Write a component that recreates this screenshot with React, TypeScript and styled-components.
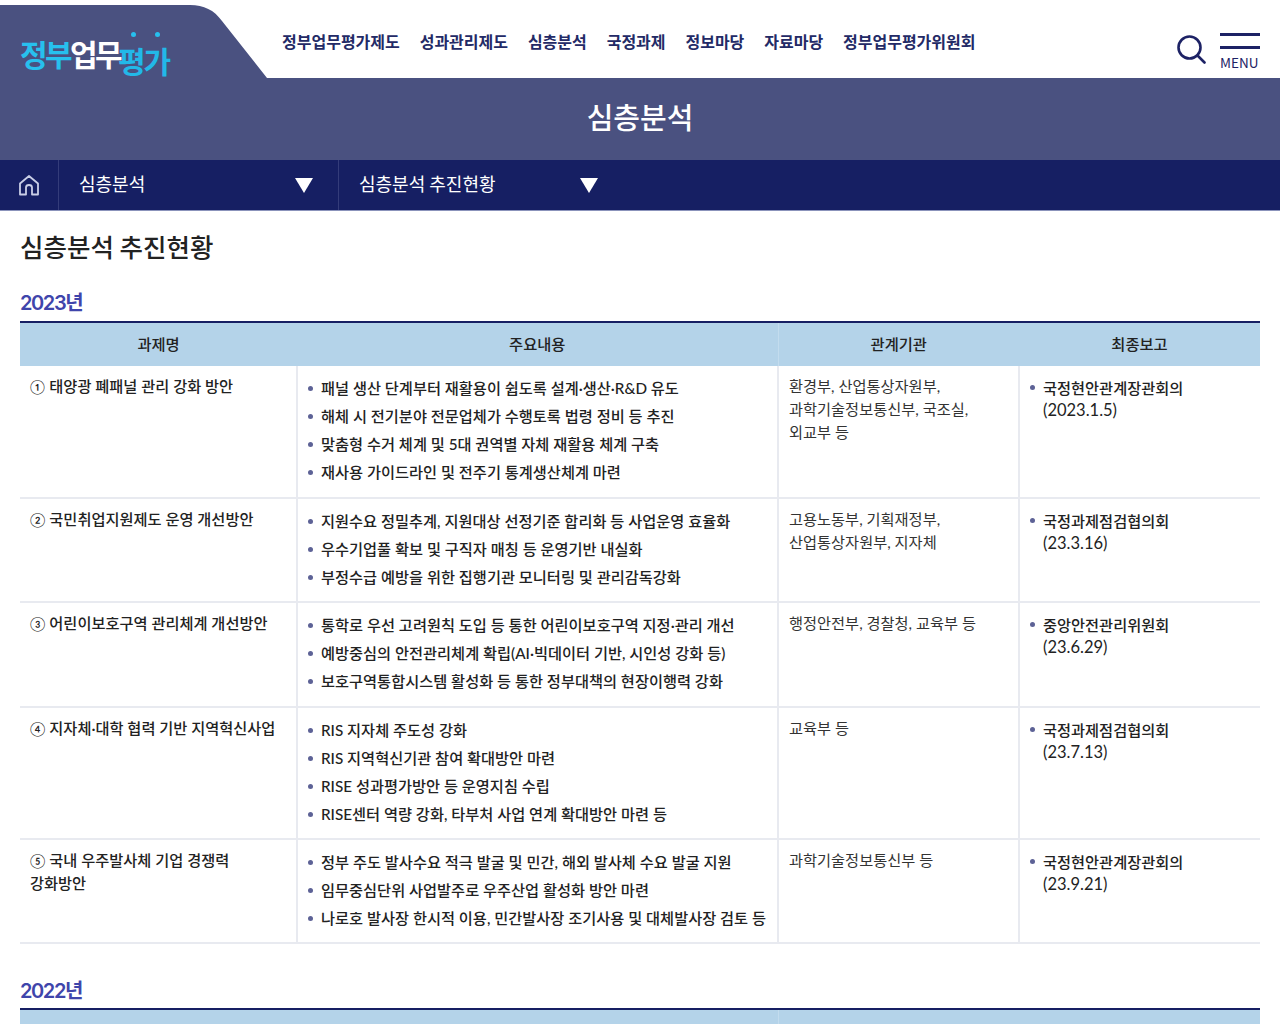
import React, { FunctionComponent } from 'react'
import styled, { createGlobalStyle } from 'styled-components'

const GlobalStyle = createGlobalStyle`
  html, body {
    margin: 0;
    padding: 0;
    background: #fff;
    color: #222;
    font-family: Lato, "Noto Sans CJK KR", sans-serif;
  }
  * { box-sizing: border-box; }
`

const Page = styled.div`
  width: 1280px;
  height: 1024px;
  overflow: hidden;
`
const Header = styled.header`
  position: relative;
  height: 78px;
  display: flex;
  padding-left: 282px;
`
const LogoShape = styled.svg`
  position: absolute;
  left: 0;
  top: 0;
`
const Logo = styled.a`
  position: absolute;
  left: 20px;
  top: 32px;
  width: 160px;
  height: 48px;
  font-family: "Noto Sans CJK KR", sans-serif;
  font-weight: 700;
  font-size: 30px;
  letter-spacing: -2.6px;
  line-height: 42px;
  white-space: nowrap;
`
const LogoBlue = styled.span`
  color: #27c0ee;
`
const LogoWhite = styled.span`
  color: #fff;
`
const LogoLast = styled.span`
  position: relative;
  top: 7px;
  margin-left: -2px;
  letter-spacing: -2.2px;
  color: #22b8e8;
`
const Dot = styled.i<{ $left: number }>`
  position: absolute;
  top: 0;
  left: ${(p) => p.$left}px;
  width: 5px;
  height: 5px;
  border-radius: 50%;
  background: #27c0ee;
`
const Nav = styled.nav`
  display: flex;
  gap: 19.9px;
  padding-top: 29px;
`
const NavItem = styled.a`
  font-family: "Noto Sans CJK KR", sans-serif;
  font-size: 16px;
  font-weight: 700;
  line-height: 24px;
  color: #232a66;
  white-space: nowrap;
`
const Tools = styled.div`
  position: absolute;
  right: 20px;
  top: 33px;
  display: flex;
  gap: 14px;
`
const SearchIcon = styled.svg`
  margin-top: 2px;
`
const MenuButton = styled.div`
  width: 40px;
`
const MenuBar = styled.div`
  height: 3px;
  background: #1d2265;
  margin-bottom: 10px;
`
const MenuLabel = styled.div`
  margin-top: -6px;
  font-family: "Noto Sans CJK KR", sans-serif;
  font-size: 13.5px;
  font-weight: 400;
  line-height: 18px;
  color: #1d2265;
`
const TitleBand = styled.div`
  height: 82px;
  padding-bottom: 6px;
  background: #4a5180;
  display: flex;
  align-items: center;
  justify-content: center;
`
const PageTitle = styled.h1`
  margin: 0;
  font-family: "Noto Sans CJK KR", sans-serif;
  font-size: 29px;
  font-weight: 500;
  color: #fff;
`
const SubNav = styled.div`
  height: 51px;
  background: #161f63;
  border-bottom: 1px solid #8b93bb;
  display: flex;
`
const HomeCell = styled.div`
  width: 59px;
  display: flex;
  align-items: center;
  justify-content: center;
  border-right: 1px solid #343c7a;
`
const SubCell = styled.div`
  width: 280px;
  padding: 0 25px 0 20px;
  display: flex;
  align-items: center;
  justify-content: space-between;
  border-right: 1px solid #343c7a;
  color: #fff;
  font-family: "Noto Sans CJK KR", sans-serif;
  font-size: 18px;
  line-height: 24px;
`
const SubCellLast = styled(SubCell)`
  padding-right: 21px;
  border-right: 0;
`
const SubLabel = styled.span`
  padding-bottom: 4px;
`
const Arrow = styled.i`
  width: 0;
  height: 0;
  border-left: 9px solid transparent;
  border-right: 9px solid transparent;
  border-top: 15px solid #fff;
`
const Content = styled.main`
  padding: 0 20px;
`
const Heading = styled.h2`
  margin: 0;
  padding-top: 17px;
  font-family: "Noto Sans CJK KR", sans-serif;
  font-size: 25.5px;
  font-weight: 500;
  line-height: 36px;
  color: #222;
`
const Year = styled.h3`
  margin: 0;
  padding-top: 25px;
  height: 57px;
  font-family: Inter, "Noto Sans CJK KR", sans-serif;
  font-size: 20px;
  font-weight: 600;
  line-height: 28px;
  letter-spacing: -1.4px;
  color: #3f45ab;
`
const YearNext = styled(Year)`
  padding-top: 33px;
  height: 64px;
`
const Table = styled.table`
  width: 1240px;
  table-layout: fixed;
  border-collapse: collapse;
  border-top: 2px solid #161f63;
`
const Th = styled.th`
  height: 44px;
  padding: 0 0 4px;
  background: #b4d3e9;
  font-family: "Noto Sans CJK KR", sans-serif;
  font-size: 15.3px;
  font-weight: 500;
  color: #222;
  &:nth-child(3) { border-left: 1px solid #c3dcee; }
`
const Td = styled.td<{ $h: number }>`
  height: ${(p) => p.$h}px;
  padding: 9px 10px 0;
  vertical-align: top;
  border-left: 2px solid #e8eaf0;
  border-bottom: 2px solid #e8eaf0;
  font-family: Lato, "Noto Sans CJK KR", sans-serif;
  font-size: 15.25px;
  line-height: 23px;
  color: #333;
  &:first-child {
    border-left: 0;
    color: #222;
    font-weight: 500;
  }
`
const Num = styled.span`
  font-size: 14px;
  font-weight: 400;
  letter-spacing: -2px;
  margin-right: 2px;
`
const ListTd = styled(Td)`
  padding-top: 8px;
`
const BulletList = styled.ul`
  margin: 0;
  padding: 0;
  list-style: none;
`
const Bullet = styled.li`
  position: relative;
  padding-left: 13px;
  line-height: 28px;
  font-weight: 500;
  color: #222;
  white-space: nowrap;
  &::before {
    content: '';
    position: absolute;
    left: 0;
    top: 12px;
    width: 5px;
    height: 5px;
    border-radius: 50%;
    background: #5d6296;
  }
`
const ReportItem = styled(Bullet)`
  line-height: 22px;
  padding-top: 3px;
  &::before { top: 11px; }
`
const ReportDate = styled.span`
  display: inline-block;
  font-size: 16.5px;
  font-weight: 400;
`

interface Row {
  num: string
  title: React.ReactNode
  height: number
  items: string[]
  orgs: React.ReactNode
  report: string
  date: string
}

const rows: Row[] = [
  {
    num: '①',
    title: '태양광 폐패널 관리 강화 방안',
    height: 132,
    items: [
      '패널 생산 단계부터 재활용이 쉽도록 설계·생산·R&D 유도',
      '해체 시 전기분야 전문업체가 수행토록 법령 정비 등 추진',
      '맞춤형 수거 체계 및 5대 권역별 자체 재활용 체계 구축',
      '재사용 가이드라인 및 전주기 통계생산체계 마련',
    ],
    orgs: (
      <>
        환경부, 산업통상자원부,
        <br />
        과학기술정보통신부, 국조실,
        <br />
        외교부 등
      </>
    ),
    report: '국정현안관계장관회의',
    date: '(2023.1.5)',
  },
  {
    num: '②',
    title: '국민취업지원제도 운영 개선방안',
    height: 104,
    items: [
      '지원수요 정밀추계, 지원대상 선정기준 합리화 등 사업운영 효율화',
      '우수기업풀 확보 및 구직자 매칭 등 운영기반 내실화',
      '부정수급 예방을 위한 집행기관 모니터링 및 관리감독강화',
    ],
    orgs: (
      <>
        고용노동부, 기획재정부,
        <br />
        산업통상자원부, 지자체
      </>
    ),
    report: '국정과제점검협의회',
    date: '(23.3.16)',
  },
  {
    num: '③',
    title: '어린이보호구역 관리체계 개선방안',
    height: 105,
    items: [
      '통학로 우선 고려원칙 도입 등 통한 어린이보호구역 지정·관리 개선',
      '예방중심의 안전관리체계 확립(AI·빅데이터 기반, 시인성 강화 등)',
      '보호구역통합시스템 활성화 등 통한 정부대책의 현장이행력 강화',
    ],
    orgs: '행정안전부, 경찰청, 교육부 등',
    report: '중앙안전관리위원회',
    date: '(23.6.29)',
  },
  {
    num: '④',
    title: '지자체·대학 협력 기반 지역혁신사업',
    height: 132,
    items: [
      'RIS 지자체 주도성 강화',
      'RIS 지역혁신기관 참여 확대방안 마련',
      'RISE 성과평가방안 등 운영지침 수립',
      'RISE센터 역량 강화, 타부처 사업 연계 확대방안 마련 등',
    ],
    orgs: '교육부 등',
    report: '국정과제점검협의회',
    date: '(23.7.13)',
  },
  {
    num: '⑤',
    title: (
      <>
        국내 우주발사체 기업 경쟁력
        <br />
        강화방안
      </>
    ),
    height: 104,
    items: [
      '정부 주도 발사수요 적극 발굴 및 민간, 해외 발사체 수요 발굴 지원',
      '임무중심단위 사업발주로 우주산업 활성화 방안 마련',
      '나로호 발사장 한시적 이용, 민간발사장 조기사용 및 대체발사장 검토 등',
    ],
    orgs: '과학기술정보통신부 등',
    report: '국정현안관계장관회의',
    date: '(23.9.21)',
  },
]

const HeadRow: FunctionComponent = () => (
  <>
    <colgroup>
      <col width={277} />
      <col width={481} />
      <col width={241} />
      <col width={241} />
    </colgroup>
    <thead>
      <tr>
        <Th>과제명</Th>
        <Th>주요내용</Th>
        <Th>관계기관</Th>
        <Th>최종보고</Th>
      </tr>
    </thead>
  </>
)

export default function App() {
  return (
    <Page>
      <GlobalStyle />
      <Header>
        <LogoShape width="270" height="80" viewBox="0 0 270 80">
          <path d="M0 5H190C204 5 214 10 222 21L267 78V80H0Z" fill="#4a5180" />
        </LogoShape>
        <Logo>
          <Dot $left={111} />
          <Dot $left={135} />
          <LogoBlue>정부</LogoBlue>
          <LogoWhite>업무</LogoWhite>
          <LogoLast>평가</LogoLast>
        </Logo>
        <Nav>
          <NavItem>정부업무평가제도</NavItem>
          <NavItem>성과관리제도</NavItem>
          <NavItem>심층분석</NavItem>
          <NavItem>국정과제</NavItem>
          <NavItem>정보마당</NavItem>
          <NavItem>자료마당</NavItem>
          <NavItem>정부업무평가위원회</NavItem>
        </Nav>
        <Tools>
          <SearchIcon width="29" height="29" viewBox="0 0 29 29" fill="none" stroke="#1d2265">
            <circle cx="12.5" cy="12.5" r="11" strokeWidth="2.6" />
            <path d="M20.5 20.5L27.5 27.5" strokeWidth="2.6" strokeLinecap="round" />
          </SearchIcon>
          <MenuButton>
            <MenuBar />
            <MenuBar />
            <MenuLabel>MENU</MenuLabel>
          </MenuButton>
        </Tools>
      </Header>
      <TitleBand>
        <PageTitle>심층분석</PageTitle>
      </TitleBand>
      <SubNav>
        <HomeCell>
          <svg width="22" height="24" viewBox="0 0 22 24" fill="none" stroke="#c9cee6" strokeWidth="1.8" strokeLinejoin="round">
            <path d="M11 3L2 10.5V21.5H8V14.5C8 13 9.5 12 11 12C12.5 12 14 13 14 14.5V21.5H20V10.5Z" />
          </svg>
        </HomeCell>
        <SubCell>
          <SubLabel>심층분석</SubLabel>
          <Arrow />
        </SubCell>
        <SubCellLast>
          <SubLabel>심층분석 추진현황</SubLabel>
          <Arrow />
        </SubCellLast>
      </SubNav>
      <Content>
        <Heading>심층분석 추진현황</Heading>
        <Year>2023년</Year>
        <Table>
          <HeadRow />
          <tbody>
            {rows.map((row) => (
              <tr key={row.num}>
                <Td $h={row.height}>
                  <Num>{row.num}</Num> {row.title}
                </Td>
                <ListTd $h={row.height}>
                  <BulletList>
                    {row.items.map((item) => (
                      <Bullet key={item}>{item}</Bullet>
                    ))}
                  </BulletList>
                </ListTd>
                <Td $h={row.height}>{row.orgs}</Td>
                <ListTd $h={row.height}>
                  <BulletList>
                    <ReportItem>
                      {row.report}
                      <br />
                      <ReportDate>{row.date}</ReportDate>
                    </ReportItem>
                  </BulletList>
                </ListTd>
              </tr>
            ))}
          </tbody>
        </Table>
        <YearNext>2022년</YearNext>
        <Table>
          <HeadRow />
        </Table>
      </Content>
    </Page>
  )
}
